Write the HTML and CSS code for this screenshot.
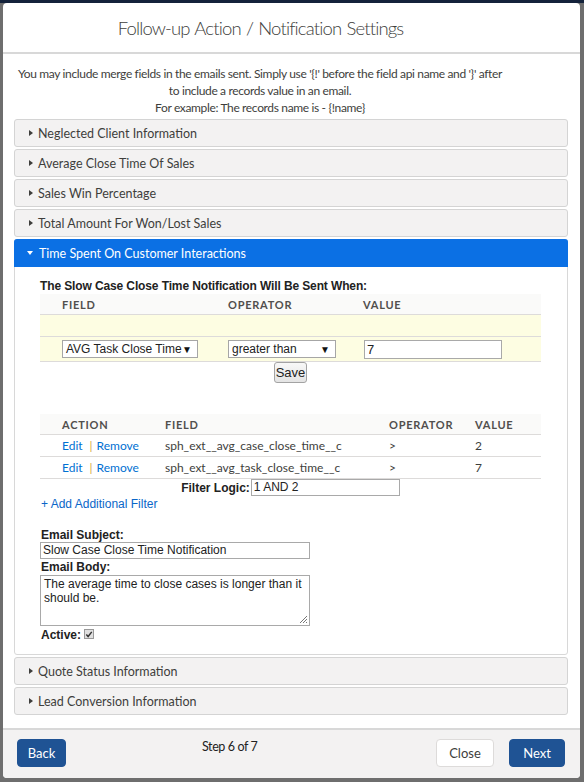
FILE: index.html
```html
<!DOCTYPE html>
<html>
<head>
<meta charset="utf-8">
<link rel="stylesheet" href="styles.css">
</head>
<body>
<div class="top-strip"></div>
<div class="modal">
  <header class="modal-header">
    <h2 class="modal-title">Follow-up Action / Notification Settings</h2>
  </header>
  <div class="modal-body">
    <p class="intro">You may include merge fields in the emails sent. Simply use '{!' before the field api name and '}' after<br>to include a records value in an email.<br>For example: The records name is - {!name}</p>
    <div class="sections">
      <div class="section"><div class="section-head"><span class="caret"></span>Neglected Client Information</div></div>
      <div class="section"><div class="section-head"><span class="caret"></span>Average Close Time Of Sales</div></div>
      <div class="section"><div class="section-head"><span class="caret"></span>Sales Win Percentage</div></div>
      <div class="section"><div class="section-head"><span class="caret"></span>Total Amount For Won/Lost Sales</div></div>
      <div class="section open">
        <div class="section-head"><span class="caret down"></span>Time Spent On Customer Interactions</div>
        <div class="section-body">
          <div class="crit-title">The Slow Case Close Time Notification Will Be Sent When:</div>
          <div class="tbl">
            <div class="row head">
              <div class="c c1">Field</div><div class="c c2">Operator</div><div class="c c3">Value</div>
            </div>
            <div class="row yellow empty"></div>
            <div class="row yellow edit">
              <div class="c c1"><span class="sel sel-field">AVG Task Close Time<span class="arr">▼</span></span></div>
              <div class="c c2"><span class="sel sel-op">greater than<span class="arr">▼</span></span></div>
              <div class="c c3"><span class="inp inp-val">7</span></div>
            </div>
          </div>
          <div class="save-line"><button class="btn-save">Save</button></div>

          <div class="tbl tbl2">
            <div class="row head">
              <div class="c d1">Action</div><div class="c d2">Field</div><div class="c d3">Operator</div><div class="c d4">Value</div>
            </div>
            <div class="row data">
              <div class="c d1"><a class="lnk">Edit</a><span class="sep">|</span><a class="lnk">Remove</a></div>
              <div class="c d2">sph_ext__avg_case_close_time__c</div>
              <div class="c d3">&gt;</div>
              <div class="c d4">2</div>
            </div>
            <div class="row data">
              <div class="c d1"><a class="lnk">Edit</a><span class="sep">|</span><a class="lnk">Remove</a></div>
              <div class="c d2">sph_ext__avg_task_close_time__c</div>
              <div class="c d3">&gt;</div>
              <div class="c d4">7</div>
            </div>
          </div>
          <div class="logic-line"><span class="lbl">Filter Logic:</span><span class="inp inp-logic">1 AND 2</span></div>
          <a class="add-filter">+ Add Additional Filter</a>

          <div class="lbl lbl-block lbl-subject">Email Subject:</div>
          <div class="inp inp-subject">Slow Case Close Time Notification</div>
          <div class="lbl lbl-block">Email Body:</div>
          <div class="inp textarea">The average time to close cases is longer than it should be.<svg class="grip" width="9" height="9" viewBox="0 0 9 9"><path d="M8 1L1 8M8 4L4 8M8 7L7 8" stroke="#777" stroke-width="1"/></svg></div>
          <div class="active-line"><span class="lbl">Active:</span><span class="chk"><svg width="9" height="9" viewBox="0 0 9 9"><path d="M1.5 4.5L3.5 6.8L7.6 1.6" fill="none" stroke="#333" stroke-width="1.6"/></svg></span></div>
        </div>
      </div>
      <div class="section"><div class="section-head"><span class="caret"></span>Quote Status Information</div></div>
      <div class="section"><div class="section-head"><span class="caret"></span>Lead Conversion Information</div></div>
    </div>
  </div>
  <footer class="modal-footer">
    <button class="btn btn-brand">Back</button>
    <span class="step">Step 6 of 7</span>
    <button class="btn btn-neutral">Close</button>
    <button class="btn btn-brand btn-next">Next</button>
  </footer>
</div>
</body>
</html>
```
FILE: styles.css
```css
html, body {
  margin: 0;
  padding: 0;
}
body {
  background: #6e6e6e;
  width: 584px;
  height: 782px;
  overflow: hidden;
  font-family: Lato, "Liberation Sans", sans-serif;
  color: #3e3e3c;
}
.top-strip {
  height: 3px;
  background: #14223b;
  margin-bottom: -3px;
}
.modal {
  position: relative;
  margin-left: 3px;
  width: 577px;
  background: #fff;
  border-radius: 4px;
  margin-top: 3px;
}
.modal-header {
  height: 49px;
  border-bottom: 2px solid #d8d8d8;
  display: flex;
  align-items: center;
  justify-content: center;
  padding-right: 62px;
}
.modal-title {
  margin: 0;
  font-size: 18.5px;
  font-weight: 300;
  color: #3e3e3c;
  letter-spacing: -0.85px;
  word-spacing: 1px;
}
.modal-body {
  padding: 11px 12px 11px 11px;
}
.intro {
  margin: 0 0 3px;
  padding-right: 62px;
  font-size: 12px;
  line-height: 17px;
  letter-spacing: -0.35px;
  text-align: center;
  white-space: nowrap;
  color: #3e3e3c;
}
.section {
  border: 1px solid #d4d4d4;
  border-radius: 3px;
  background: #f3f2f2;
  margin-bottom: 2px;
}
.section-head {
  height: 26px;
  display: flex;
  align-items: center;
  padding-left: 14px;
  font-size: 12.5px;
  color: #3e3e3c;
}
.caret {
  width: 0;
  height: 0;
  border-top: 3.5px solid transparent;
  border-bottom: 3.5px solid transparent;
  border-left: 4px solid #3e3e3c;
  margin-right: 5px;
}
.caret.down {
  border-left: 3.5px solid transparent;
  border-right: 3.5px solid transparent;
  border-top: 4px solid #fff;
  border-bottom: 0;
  margin-right: 6px;
  margin-left: -2px;
}
.section.open {
  background: #fff;
  border-color: #d8d8d8;
}
.section.open .section-head {
  background: #0b70e4;
  color: #fff;
  margin: -1px -1px 0;
  height: 28px;
  padding-left: 15px;
  border-radius: 3px 3px 0 0;
}
.section-body {
  padding: 12px 26px 12px 25px;
  font-family: "Liberation Sans", Arial, sans-serif;
  font-size: 12px;
  color: #222;
}
.crit-title {
  font-weight: bold;
  font-size: 12px;
  line-height: 15px;
  letter-spacing: -0.12px;
  color: #222;
}
.tbl {
  width: 501px;
}
.row {
  display: flex;
  align-items: center;
  border-bottom: 1px solid #dddbda;
}
.row.head {
  height: 20px;
  background: #fafaf9;
  font-family: Lato, sans-serif;
  font-size: 11px;
  font-weight: bold;
  letter-spacing: 0.75px;
  text-transform: uppercase;
  color: #514f4d;
}
.row.yellow {
  background: #fdfde2;
}
.row.empty {
  height: 21px;
}
.row.edit {
  height: 24px;
}
.c {
  white-space: nowrap;
}
.c1 { padding-left: 22px; width: 166px; }
.c2 { width: 135px; }
.c3 { flex: 1; }
.sel {
  display: inline-flex;
  align-items: center;
  justify-content: space-between;
  box-sizing: border-box;
  height: 18px;
  border: 1px solid #a6a6a6;
  background: #fff;
  font-family: "Liberation Sans", Arial, sans-serif;
  font-size: 12px;
  color: #222;
  padding: 0 5px 0 3px;
}
.arr {
  font-size: 10px;
  color: #111;
}
.sel-field { width: 136px; }
.sel-op { width: 108px; }
.inp {
  display: inline-block;
  box-sizing: border-box;
  border: 1px solid #a9a9a9;
  background: #fff;
  font-family: "Liberation Sans", Arial, sans-serif;
  font-size: 12px;
  color: #222;
  line-height: 15px;
  padding: 0 2px;
}
.inp-val {
  width: 138px;
  height: 19px;
  line-height: 17px;
  font-size: 13px;
  margin-left: 1px;
}
.save-line {
  display: flex;
  justify-content: center;
  height: 52px;
  align-items: flex-start;
}
.btn-save {
  font-family: "Liberation Sans", Arial, sans-serif;
  font-size: 13px;
  height: 21px;
  width: 33px;
  padding: 0;
  border: 1px solid #a3a3a3;
  border-radius: 3px;
  background: linear-gradient(#f8f8f8, #e4e4e4);
  color: #222;
}
.row.data {
  height: 21px;
  font-family: Lato, sans-serif;
  font-size: 12px;
  color: #3e3e3c;
}
.d1 { padding-left: 22px; width: 103px; }
.d2 { width: 224px; }
.d3 { width: 86px; }
.d4 { flex: 1; }
.lnk {
  color: #0070d2;
  text-decoration: none;
}
.sep {
  color: #d9a441;
  margin: 0 4px 0 7px;
}
.logic-line {
  display: flex;
  justify-content: center;
  align-items: center;
  height: 17px;
}
.lbl {
  font-weight: bold;
  font-size: 12px;
  color: #222;
}
.inp-logic {
  width: 149px;
  height: 17px;
  margin-left: 1px;
}
.add-filter {
  display: block;
  color: #0a66c8;
  font-size: 12px;
  line-height: 14px;
  margin: 1px 0 17px 1px;
}
.lbl-block {
  display: block;
  line-height: 14px;
  margin-left: 1px;
}
.inp-subject {
  display: block;
  width: 270px;
  height: 17px;
  margin-bottom: 1px;
}
.textarea {
  position: relative;
  display: block;
  width: 270px;
  height: 51px;
  line-height: 14px;
  padding: 1px 3px;
  margin-top: 1px;
  white-space: normal;
}
.grip {
  position: absolute;
  right: 1px;
  bottom: 1px;
}
.active-line {
  display: flex;
  align-items: center;
  margin-top: 2px;
  margin-left: 1px;
  height: 14px;
}
.chk {
  display: inline-flex;
  align-items: center;
  justify-content: center;
  width: 10px;
  height: 10px;
  box-sizing: border-box;
  border: 1px solid #999;
  background: #e0e0e0;
  margin-left: 3px;
  margin-top: -2px;
}
.modal-footer {
  height: 50px;
  box-sizing: border-box;
  border-top: 2px solid #d8d8d8;
  background: #f3f2f2;
  border-radius: 0 0 4px 4px;
  padding: 9px 15px 0 14px;
  display: flex;
  align-items: flex-start;
}
.btn {
  height: 28px;
  border-radius: 4px;
  font-family: Lato, sans-serif;
  font-size: 13px;
  padding: 0;
  box-sizing: border-box;
}
.btn-brand {
  background: #1f5394;
  border: 1px solid #1f5394;
  color: #fff;
  width: 49px;
}
.btn-next {
  width: 56px;
  margin-left: 15px;
}
.btn-neutral {
  background: #fff;
  border: 1px solid #dddbda;
  color: #3e3e3c;
  width: 58px;
  margin-left: auto;
}
.step {
  margin-left: 136px;
  font-size: 12.5px;
  line-height: 16px;
  letter-spacing: -0.4px;
  color: #222;
}
```
